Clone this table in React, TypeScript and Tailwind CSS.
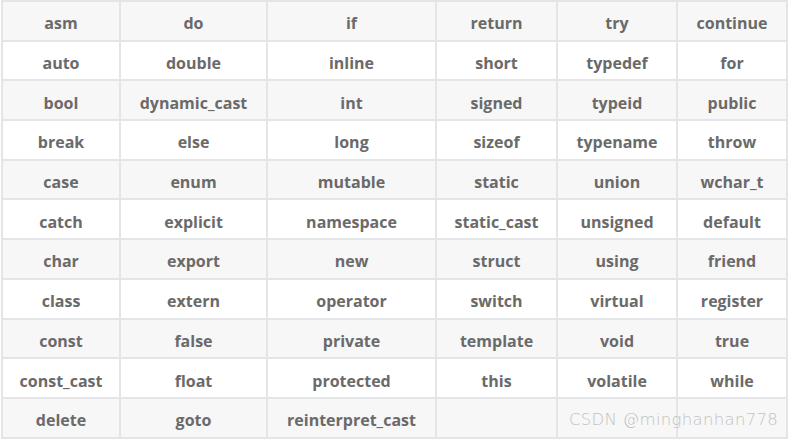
import React from "react";

const rows: string[][] = [
  ["asm", "do", "if", "return", "try", "continue"],
  ["auto", "double", "inline", "short", "typedef", "for"],
  ["bool", "dynamic_cast", "int", "signed", "typeid", "public"],
  ["break", "else", "long", "sizeof", "typename", "throw"],
  ["case", "enum", "mutable", "static", "union", "wchar_t"],
  ["catch", "explicit", "namespace", "static_cast", "unsigned", "default"],
  ["char", "export", "new", "struct", "using", "friend"],
  ["class", "extern", "operator", "switch", "virtual", "register"],
  ["const", "false", "private", "template", "void", "true"],
  ["const_cast", "float", "protected", "this", "volatile", "while"],
  ["delete", "goto", "reinterpret_cast", "", "", ""],
];

const colClasses = ["w-[118px]", "w-[147px]", "w-[169px]", "w-[121px]", "w-[120px]", "w-[110px]"];

export default function App() {
  return (
    <div className="relative w-[789px] h-[442px] bg-white overflow-hidden font-['Open_Sans',sans-serif]">
      <table className="table-fixed border-collapse border-2 border-[#e3e5e8] ml-px">
        <colgroup>
          {colClasses.map((c, i) => (
            <col key={i} className={c} />
          ))}
        </colgroup>
        <tbody>
          {rows.map((r, i) => (
            <tr key={i} className={i % 2 === 0 ? "bg-[#f7f7f7]" : "bg-white"}>
              {r.map((c, j) => (
                <td
                  key={j}
                  className="h-[39.7px] border-2 border-[#e3e5e8] text-center align-middle pt-[5px] pb-0 px-0 text-[16px] font-bold text-[#6a6a6a] leading-none"
                >
                  {c}
                </td>
              ))}
            </tr>
          ))}
        </tbody>
      </table>
      <div className="absolute left-[569px] top-[408px] text-[16.5px] text-[#c2c2c2] tracking-[0.3px] font-['DejaVu_Sans','Liberation_Sans',sans-serif] font-light">
        CSDN @minghanhan778
      </div>
    </div>
  );
}
